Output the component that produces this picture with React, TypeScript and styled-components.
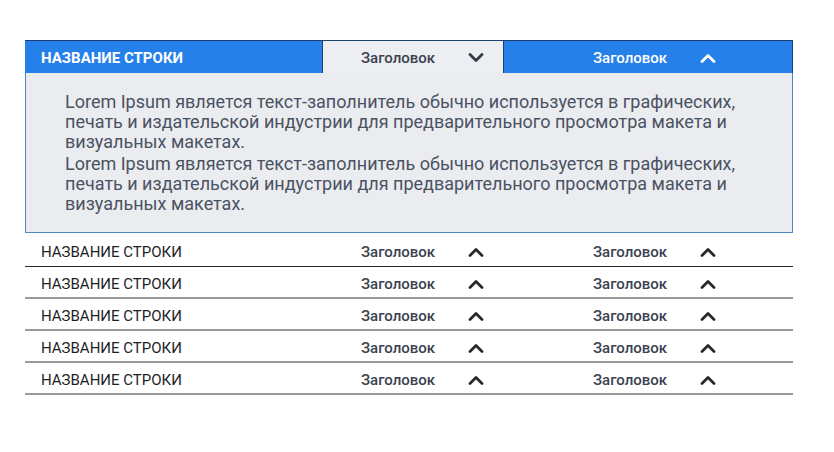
import React from "react";
import styled, { createGlobalStyle } from "styled-components";

const GlobalStyle = createGlobalStyle`
  body {
    margin: 0;
    background: #ffffff;
    font-family: Roboto, "Liberation Sans", Arial, sans-serif;
  }
`;

const Table = styled.div`
  width: 768px;
  margin: 40px 0 0 25px;
`;

const HeaderRow = styled.div`
  display: grid;
  grid-template-columns: 297px 182px 50px 182px 1fr;
  height: 32px;
  background: #2680e9;
  border-top: 1px solid #1d3f6b;
  border-right: 1px solid #1d3f6b;
`;

const Row = styled.div<{ $dark?: boolean }>`
  display: grid;
  grid-template-columns: 297px 182px 50px 182px 1fr;
  box-sizing: border-box;
  height: 32px;
  padding-top: 3px;
  border-bottom: ${({ $dark }) => ($dark ? "1px solid #2a2a2a" : "2px solid #9a9a9a")};
  padding-bottom: ${({ $dark }) => ($dark ? "1px" : "0")};
`;

const NameCell = styled.div<{ $head?: boolean }>`
  display: flex;
  align-items: center;
  padding-left: 16px;
  padding-top: ${({ $head }) => ($head ? "2px" : "0")};
  font-size: 15px;
  font-weight: ${({ $head }) => ($head ? 700 : 400)};
  color: ${({ $head }) => ($head ? "#ffffff" : "#1f1f1f")};
`;

const ColCell = styled.div<{ $active?: boolean; $light?: boolean }>`
  display: flex;
  align-items: center;
  padding-left: 39px;
  padding-top: ${({ $active, $light }) => ($active || $light ? "2px" : "0")};
  gap: 33px;
  font-size: 15px;
  font-weight: 500;
  color: ${({ $light }) => ($light ? "#ffffff" : "#3b4250")};
  background: ${({ $active }) => ($active ? "#eceef2" : "transparent")};
  border-left: ${({ $active }) => ($active ? "1px solid #1d3f6b" : "none")};
  border-right: ${({ $active }) => ($active ? "1px solid #1d3f6b" : "none")};
  ${({ $active }) => ($active ? "padding-left: 38px;" : "")}
`;

const Spacer = styled.div``;

const Panel = styled.div`
  background: #eaecf0;
  border: 1px solid #4f86c6;
  border-top: none;
  padding: 19px 39px 16px 39px;
  font-size: 18px;
  line-height: 20px;
  color: #4a5262;
  margin-bottom: 2px;
`;

const Para = styled.p`
  margin: 0 0 2px 0;
`;

const Chevron = ({ up, color }: { up?: boolean; color: string }) => (
  <svg width="16" height="10" viewBox="0 0 16 10" style={{ flexShrink: 0 }}>
    <path
      d={up ? "M2 8.5 L8 2.5 L14 8.5" : "M2 1.5 L8 7.5 L14 1.5"}
      fill="none"
      stroke={color}
      strokeWidth="2.8"
      strokeLinecap="round"
      strokeLinejoin="round"
    />
  </svg>
);

const text =
  "Lorem Ipsum является текст-заполнитель обычно используется в графических, печать и издательской индустрии для предварительного просмотра макета и визуальных макетах.";

export default function App() {
  const rows = [0, 1, 2, 3, 4];
  return (
    <>
      <GlobalStyle />
      <Table>
        <HeaderRow>
          <NameCell $head>НАЗВАНИЕ СТРОКИ</NameCell>
          <ColCell $active>
            Заголовок
            <Chevron color="#333a44" />
          </ColCell>
          <Spacer />
          <ColCell $light>
            Заголовок
            <Chevron up color="#ffffff" />
          </ColCell>
          <Spacer />
        </HeaderRow>
        <Panel>
          <Para>{text}</Para>
          <Para>{text}</Para>
        </Panel>
        {rows.map((i) => (
          <Row key={i} $dark={i === 0}>
            <NameCell>НАЗВАНИЕ СТРОКИ</NameCell>
            <ColCell>
              Заголовок
              <Chevron up color="#2a2a2a" />
            </ColCell>
            <Spacer />
            <ColCell>
              Заголовок
              <Chevron up color="#2a2a2a" />
            </ColCell>
            <Spacer />
          </Row>
        ))}
      </Table>
    </>
  );
}
